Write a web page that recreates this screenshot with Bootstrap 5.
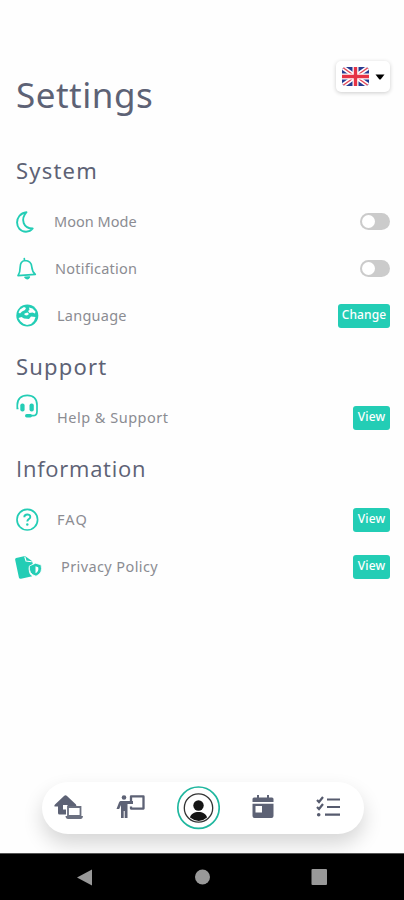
<!DOCTYPE html>
<html lang="en">
<head>
<meta charset="utf-8">
<meta name="viewport" content="width=device-width, initial-scale=1">
<title>Settings</title>
<link href="https://cdn.jsdelivr.net/npm/bootstrap@5.3.0/dist/css/bootstrap.min.css" rel="stylesheet">
<style>
:root { --teal: #23cdb5; --ink: #5d6275; }
body { font-family: "Noto Sans", sans-serif; background: #fefefe; }
.screen { width: 404px; height: 900px; }
.top-area { height: 143px; padding: 61px 14px 0 16px; }
.page-title { font-size: 35px; line-height: 48px; letter-spacing: .5px; color: var(--ink); margin-top: 10px; }
.lang-btn { width: 54px; height: 31px; border-radius: 5px; box-shadow: 0 1px 4px rgba(0,0,0,.2); padding: 0 5px 0 6px; background: #fff; }
.group-title { height: 55px; font-size: 22px; line-height: 54px; color: var(--ink); margin: 0; letter-spacing: 1.2px; padding-left: 16px; }
.setting { height: 47px; padding: 0 14px 0 15px; }
.setting svg { flex: none; }
.setting-label { font-size: 14.5px; color: #8b8c92; letter-spacing: .25px; line-height: 20px; white-space: nowrap; padding-bottom: 2px; margin-left: 18px; }
.toggle { width: 30px; height: 17px; border-radius: 9px; background: #cbcbcb; padding: 2px; }
.toggle i { width: 13px; height: 13px; border-radius: 50%; background: #fff; }
.act { height: 24px; width: 37px; background: var(--teal); color: #fff; font-size: 12px; font-weight: 500; line-height: 20px; padding: 0 0 2px; border: 0; border-radius: 3px; letter-spacing: .1px; }
.act-wide { width: 52px; }
.tabs { width: 322px; height: 52px; border-radius: 26px; background: #fff; margin: 0 0 19px 42px; box-shadow: 0 10px 20px rgba(0,0,0,.16); padding: 0 23px 0 12px; }
.tabs .tab-icon { margin-bottom: 2px; }
.tabs .tab-last { margin-left: 42px; }
.sysbar { height: 47px; background: #000; border-top: 1px solid #555; padding: 0 77px; }
.ls-info { font-family: "Open Sans", sans-serif; letter-spacing: .75px; }
.ls-wide { letter-spacing: .5px; }
.ls-moon { letter-spacing: .02px; margin-left: 19px; }
.ls-bell { margin-left: 17px; }
.ls-policy { margin-left: 19px; letter-spacing: .4px; }
.ls-faq { letter-spacing: 1.1px; }
</style>
</head>
<body>
<div class="screen d-flex flex-column overflow-hidden">
  <header class="top-area d-flex justify-content-between align-items-start">
    <h1 class="page-title fw-normal mb-0">Settings</h1>
    <button class="lang-btn border-0 d-flex align-items-center justify-content-between" aria-label="Choose language">
      <svg width="27" height="19" viewBox="0 0 27 19"><defs><clipPath id="fl"><rect width="27" height="19" rx="4"/></clipPath></defs><g clip-path="url(#fl)"><rect width="27" height="19" fill="#273b91"/><path d="M0 0 27 19M27 0 0 19" stroke="#fff" stroke-width="4.500"/><path d="M0 0 27 19M27 0 0 19" stroke="#e5495a" stroke-width="1.400"/><path d="M13.500 0V19M0 9.500H27" stroke="#fff" stroke-width="6"/><path d="M13.500 0V19M0 9.500H27" stroke="#e53345" stroke-width="3.400"/></g></svg>
      <svg width="10" height="6" viewBox="0 0 10 6"><path d="M.5.5h9L6 5Q5 6 4 5z" fill="#000"/></svg>
    </button>
  </header>

  <main class="flex-grow-1">
    <h2 class="group-title fw-normal">System</h2>
    <div class="setting d-flex align-items-center">
      <svg width="20" height="24" viewBox="0 0 20 24"><path d="M11.500 2.200C-1.500 4 -.5 21.500 11 21.700c3 0 5.300-1.300 6.700-3.200C8.500 18.500 5 9.500 11.500 2.200Z" fill="none" stroke="#23cdb5" stroke-width="1.900" stroke-linejoin="round"/></svg>
      <span class="setting-label ls-moon">Moon Mode</span>
      <span class="toggle d-flex ms-auto"><i></i></span>
    </div>
    <div class="setting d-flex align-items-center">
      <svg width="23" height="24" viewBox="0 0 23 24"><g fill="none" stroke="#23cdb5" stroke-width="1.700" stroke-linejoin="round" stroke-linecap="round"><path d="M10 3.500C6.500 4 5.200 6.500 5.200 10c0 4-.5 6-2.200 8.600l17.300-1.200c-2.200-1.900-3.200-4-3.500-7.400-.3-4-2.600-6.400-6.800-6.500ZM9.500 3.300 9.300 1.700"/><path d="M10 20.300q2.500 2.800 4.300-.3Z" fill="#23cdb5"/></g></svg>
      <span class="setting-label ls-bell">Notification</span>
      <span class="toggle d-flex ms-auto"><i></i></span>
    </div>
    <div class="setting d-flex align-items-center">
      <svg width="24" height="24" viewBox="0 0 24 24"><circle cx="12.300" cy="11.500" r="11" fill="#23cdb5"/><path d="m5 5.500 4-2.500 2 1-1 2-3 1.500-2 2-1.500-1zM14 3.500l3.500 1 3 3-.5 2-2.500-1-3 .5-1.500-2 1.500-1zM9.500 9.500l3-1 1.500 1.500-2 1.500-2.500-.5zM3.500 14l3-1 2.500 1.500 5 .5 2-2.500 4.500.5-1.500 4-3 3-4 1-3.500-1.200-3-2.500z" fill="#fff"/></svg>
      <span class="setting-label">Language</span>
      <button class="act act-wide ms-auto">Change</button>
    </div>

    <h2 class="group-title fw-normal">Support</h2>
    <div class="setting d-flex align-items-center">
      <svg class="align-self-start" width="24" height="24" viewBox="0 0 24 24"><path d="M3.500 14.500H2.300V11C2.300 5 6.200 1.300 12.300 1.300S22 5 22 11v6.500c0 3-1.500 4.200-4 4.200h-3" fill="none" stroke="#23cdb5" stroke-width="1.700"/><rect x="5.300" y="9.500" width="4.300" height="8" rx="2" fill="#23cdb5"/><rect x="14.500" y="9.500" width="4.300" height="8" rx="2" fill="#23cdb5"/><rect x="10" y="20" width="7" height="3.500" rx="1.700" fill="#23cdb5"/></svg>
      <span class="setting-label ls-wide">Help &amp; Support</span>
      <button class="act ms-auto">View</button>
    </div>

    <h2 class="group-title fw-normal ls-info">Information</h2>
    <div class="setting d-flex align-items-center">
      <svg width="24" height="24" viewBox="0 0 24 24"><circle cx="12.300" cy="11.700" r="10.300" fill="none" stroke="#23cdb5" stroke-width="1.700"/><path d="M9.300 9.200c0-3.600 6-3.500 6-.3 0 2.200-3 2.200-3 4.700" fill="none" stroke="#23cdb5" stroke-width="1.900"/><circle cx="12.300" cy="16.500" r="1.200" fill="#23cdb5"/></svg>
      <span class="setting-label ls-faq">FAQ</span>
      <button class="act ms-auto">View</button>
    </div>
    <div class="setting d-flex align-items-center">
      <svg width="27" height="24" viewBox="0 0 27 24"><path d="m1.200 3 8.800-2 7 5 .8 3-4 3.200c-.4 5 .7 7.300 3.500 9.100L6 23.700q-1.700.3-2.100-1.300L.2 5Q-.1 3.400 1.200 3Z" fill="#23cdb5"/><path d="m9.700 1.500 1.300 4.500 5.700.8" fill="none" stroke="#fff" stroke-width="1.100"/><path d="m20.500 8.200 5.500 1.600q2.300 8.500-5 11.400Q13.500 19 14.300 11z" fill="#23cdb5" stroke="#fff" stroke-width=".8"/><path d="m20.500 11.300 2.700.9q1 4-2.700 6z" fill="#fff"/></svg>
      <span class="setting-label ls-policy">Privacy Policy</span>
      <button class="act ms-auto">View</button>
    </div>
  </main>

  <nav class="tabs d-flex align-items-center flex-shrink-0">
    <svg class="tab-icon" width="30" height="26" viewBox="0 0 30 26"><path d="M.5 12.500q-.5-1 .5-2L10 2q1.500-1.300 3 0l9 8.500.5 2H12v8H5.500q-1.500 0-1.500-1.500v-6.500z" fill="#5d6275"/><rect x="9" y="11" width="4.500" height="4.500" fill="#fff"/><path d="M14 13h12.500v9H14z" fill="#fff" stroke="#6b7080" stroke-width="1.800"/><path d="M11.500 22h17.500q-.3 3-2.500 3H14q-2.200 0-2.500-3Z" fill="#6b7080"/></svg>
    <svg class="tab-icon ms-auto" width="29" height="26" viewBox="0 0 29 26"><circle cx="8" cy="3.500" r="2.300" fill="#5d6275"/><path d="M4.500 7H17v3h-5.500v14H8.700v-7h-1v7H5V11l-1.800 4H.5L3 8.500Q3.500 7 4.500 7z" fill="#5d6275"/><path d="M15 7V2.400h12.500v12.200H15v-2" fill="none" stroke="#5d6275" stroke-width="2.300" stroke-linejoin="round"/></svg>
    <svg class="ms-auto" width="44" height="44" viewBox="0 0 44 44"><circle cx="22.500" cy="21.700" r="20.700" fill="#fff" stroke="#20b79f" stroke-width="1.700"/><circle cx="22.500" cy="22" r="14.200" fill="none" stroke="#333" stroke-width="1.300"/><circle cx="22.500" cy="19.500" r="5.200" fill="#151515"/><path d="M14 31.500c1-7.500 16-7.500 17 0q-8 7-17 0Z" fill="#151515"/></svg>
    <svg class="tab-icon ms-auto" width="22" height="26" viewBox="0 0 22 26"><path d="M.5 8V5q0-1.500 1.500-1.500h3V1h2v2.500h8V1h2v2.500h3q1.500 0 1.500 1.500v3zM.5 9.800h21V22q0 2-2 2h-17q-2 0-2-2z" fill="#5d6275"/><rect x="3.500" y="12" width="6.500" height="6.500" fill="#fff"/></svg>
    <svg class="tab-icon tab-last" width="25" height="22" viewBox="0 0 25 22"><path d="m1 4 2 2 4-5M1 11l2 2 4-5M11 3.500h13M11 11h13M9 18.700h15" fill="none" stroke="#565b6e" stroke-width="2.200"/><circle cx="2.700" cy="18.700" r="1.800" fill="#565b6e"/></svg>
  </nav>
  <footer class="sysbar d-flex align-items-center justify-content-between flex-shrink-0">
    <svg width="16" height="17" viewBox="0 0 16 17"><path d="M0 8.500 15 .5v16z" fill="#999"/></svg>
    <svg width="16" height="16" viewBox="0 0 16 16"><circle cx="8.500" cy="8" r="7.500" fill="#999"/></svg>
    <svg width="16" height="16" viewBox="0 0 16 16"><rect x=".5" width="15.500" height="16" rx="1" fill="#999"/></svg>
  </footer>
</div>
<script src="https://cdn.jsdelivr.net/npm/bootstrap@5.3.0/dist/js/bootstrap.bundle.min.js"></script>
</body>
</html>
